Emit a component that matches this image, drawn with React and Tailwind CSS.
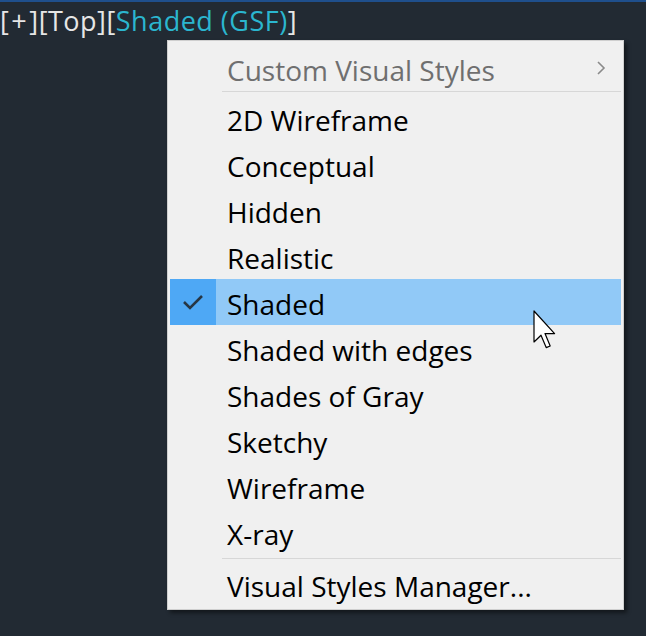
import React from 'react';

const items = [
  '2D Wireframe',
  'Conceptual',
  'Hidden',
  'Realistic',
  'Shaded',
  'Shaded with edges',
  'Shades of Gray',
  'Sketchy',
  'Wireframe',
  'X-ray',
];

function MenuRow({ label, checked, muted, submenu }) {
  return (
    <div className={`flex items-center h-[46px] ${checked ? 'bg-[#91c9f7]' : ''}`}>
      <div className={`w-[46px] h-full flex items-center justify-center ${checked ? 'bg-[#4ea8f5]' : ''}`}>
        {checked && (
          <svg width="22" height="16" viewBox="0 0 22 16">
            <path d="M2 8 L8 14 L20 2" fill="none" stroke="#263645" strokeWidth="2.6" />
          </svg>
        )}
      </div>
      <div className={`flex-1 pl-[11px] pt-[3px] text-[28px] leading-none ${muted ? 'text-[#6f6f6f]' : 'text-black'}`}>
        {label}
      </div>
      {submenu && (
        <svg className="mr-[15px]" width="10" height="16" viewBox="0 0 10 16">
          <path d="M2 2 L8 8 L2 14" fill="none" stroke="#8a8a8a" strokeWidth="1.6" />
        </svg>
      )}
    </div>
  );
}

export default function App() {
  return (
    <div
      className="relative w-[646px] h-[636px] overflow-hidden bg-[#222a33] border-t-2 border-[#1f4f8c]"
      style={{ fontFamily: '"Open Sans", "Noto Sans", sans-serif' }}
    >
      {/* viewport label */}
      <div className="pt-[5px] text-[27px] tracking-[0.5px] leading-none text-[#e6e6e6] whitespace-nowrap">
        [<span className="px-[2px]">+</span>][Top][<span className="text-[#2bb6cf]">Shaded (GSF)</span>]
      </div>

      {/* context menu */}
      <div className="absolute left-[167px] top-[38px] w-[457px] bg-[#f0f0f0] border border-[#cfcfcf] p-[2px] pt-[4px] shadow-[3px_3px_4px_rgba(0,0,0,0.45)]">
        <MenuRow label="Custom Visual Styles" muted submenu />
        <div className="ml-[52px] h-[4px] flex items-start">
          <div className="w-full h-px bg-[#d7d7d7]" />
        </div>
        {items.map((it) => (
          <MenuRow key={it} label={it} checked={it === 'Shaded'} />
        ))}
        <div className="ml-[52px] h-[6px] flex items-center">
          <div className="w-full h-px bg-[#d7d7d7]" />
        </div>
        <MenuRow label="Visual Styles Manager..." />
      </div>

      {/* mouse cursor */}
      <svg className="absolute left-[533px] top-[308px]" width="26" height="40" viewBox="0 0 13 20">
        <path
          d="M0.5 0.5 L0.5 16 L4 12.6 L6.6 18.8 L8.6 18 L6 11.8 L10.8 11.8 Z"
          fill="#ffffff"
          stroke="#000000"
          strokeWidth="0.6"
          strokeLinejoin="round"
        />
      </svg>
    </div>
  );
}
